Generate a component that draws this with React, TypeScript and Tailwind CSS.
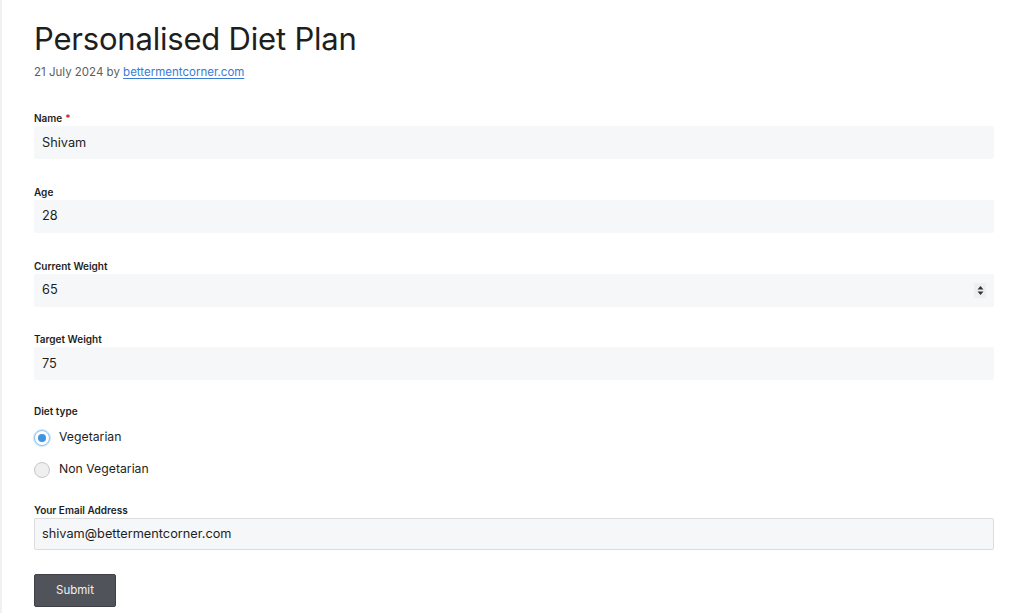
import type { ReactNode } from "react";

const font = { fontFamily: 'Inter, "Liberation Sans", Arial, sans-serif' };

function Label({ children, required }: { children: ReactNode; required?: boolean }) {
  return (
    <label className="block text-[10px] leading-[14px] font-semibold text-[#1e1e1e]">
      {children}
      {required && <span className="ml-[3px] text-[#cc1818]">*</span>}
    </label>
  );
}

function Field({
  label,
  value,
  required,
  stepper,
  className,
}: {
  label: string;
  value: string;
  required?: boolean;
  stepper?: boolean;
  className?: string;
}) {
  return (
    <div className={className}>
      <Label required={required}>{label}</Label>
      <div className="mt-px flex h-[33px] items-center rounded-[2px] bg-[#f6f7f8] pl-[8px] pr-[8px] text-[12.75px] text-[#1e1e1e]">
        <span className="flex-1">{value}</span>
        {stepper && (
          <div className="flex h-[15px] w-[12px] items-center justify-center bg-[#eeeff1]">
            <svg width="7" height="11" viewBox="0 0 7 11">
              <path d="M3.5 1 L6.5 4.5 L0.5 4.5 Z" fill="#333" />
              <path d="M3.5 10 L6.5 6.5 L0.5 6.5 Z" fill="#333" />
            </svg>
          </div>
        )}
      </div>
    </div>
  );
}

function Radio({ label, checked }: { label: string; checked?: boolean }) {
  return (
    <div className="flex h-[20px] items-center">
      {checked ? (
        <span className="flex h-[16px] w-[16px] items-center justify-center rounded-full border border-[#8fc3ef] bg-white shadow-[0_0_0_1px_#d4e8fa]">
          <span className="h-[8px] w-[8px] rounded-full bg-[#3d94df]" />
        </span>
      ) : (
        <span className="h-[16px] w-[16px] rounded-full border border-[#c6c6c6] bg-[#efefef]" />
      )}
      <span className="ml-[9px] text-[12.25px] text-[#1e1e1e]">{label}</span>
    </div>
  );
}

export default function App() {
  return (
    <div className="min-h-screen border-l-2 border-[#f1f1f1] bg-white" style={font}>
      <div className="pl-[32px] pr-[30px] pt-[19px]">
        <h1 className="text-[31px] leading-[40px] font-normal tracking-[-0.2px] text-[#1e1e1e]">
          Personalised Diet Plan
        </h1>
        <p className="mt-[5px] text-[11.5px] leading-[16px] text-[#5e5e5e]">
          21 July 2024 by{" "}
          <a href="#" className="text-[#3a7bd5] underline underline-offset-2">
            bettermentcorner.com
          </a>
        </p>

        <form className="mt-[31px]" onSubmit={(e) => e.preventDefault()}>
          <Field label="Name" value="Shivam" required />
          <Field label="Age" value="28" className="mt-[25.5px]" />
          <Field label="Current Weight" value="65" stepper className="mt-[26px]" />
          <Field label="Target Weight" value="75" className="mt-[25.5px]" />

          <div className="mt-[24px]">
            <Label>Diet type</Label>
            <div className="mt-[9.5px] flex flex-col gap-[12px]">
              <Radio label="Vegetarian" checked />
              <Radio label="Non Vegetarian" />
            </div>
          </div>

          <div className="mt-[23px]">
            <Label>Your Email Address</Label>
            <div className="mt-px flex h-[32px] items-center rounded-[2px] border border-[#dcdcde] bg-[#f6f7f8] pl-[7px] text-[12.75px] text-[#1e1e1e]">
              shivam@bettermentcorner.com
            </div>
          </div>

          <button
            type="submit"
            className="mt-[24px] h-[33.5px] w-[82px] rounded-[2px] border border-[#3f4147] bg-[#51535b] text-[11.5px] text-[#f0f0f0]"
          >
            Submit
          </button>
        </form>
      </div>
    </div>
  );
}
